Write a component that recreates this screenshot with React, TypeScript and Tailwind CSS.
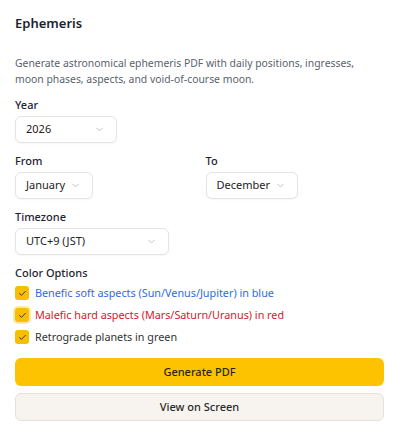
import { ChevronDown, Check } from "lucide-react";

const font = { fontFamily: '"Segoe UI", "Noto Sans", "Open Sans", sans-serif' };

function Select({ value, width }: { value: string; width: string }) {
  return (
    <div
      className={`flex items-center justify-between h-[27px] ${width} pl-[10px] pr-[11px] rounded-[6px] border border-[#e4e4e7] bg-white shadow-[0_1px_2px_rgba(0,0,0,0.04)]`}
    >
      <span className="text-[11px] text-[#222]">{value}</span>
      <ChevronDown className="h-[11px] w-[11px] text-[#a3a8b1]" strokeWidth={1.5} />
    </div>
  );
}

function Label({ children }: { children: string }) {
  return <div className="text-[11px] font-medium text-[#1f2333] leading-[16px] mb-[3px]">{children}</div>;
}

function Box({ focus }: { focus?: boolean }) {
  return (
    <span
      className={`flex items-center justify-center h-[14px] w-[14px] rounded-[3px] bg-[#f7bf00] ${
        focus ? "shadow-[0_0_0_2px_rgba(247,191,0,0.35)]" : ""
      }`}
    >
      <Check className="h-[9px] w-[9px] text-[#3a2f00]" strokeWidth={2.5} />
    </span>
  );
}

export default function App() {
  const options = [
    { text: "Benefic soft aspects (Sun/Venus/Jupiter) in blue", color: "text-[#2d6be4]" },
    { text: "Malefic hard aspects (Mars/Saturn/Uranus) in red", color: "text-[#d11a2a]", focus: true },
    { text: "Retrograde planets in green", color: "text-[#333]" },
  ];

  return (
    <div className="w-[401px] h-[439px] bg-white pl-[15px] pr-[17px] pt-[13px]" style={font}>
      <h2 className="text-[13px] font-semibold text-[#1c1f33] leading-[20px]">Ephemeris</h2>

      <p className="mt-[22px] text-[10.4px] leading-[16px] text-[#5a5f6b]">
        Generate astronomical ephemeris PDF with daily positions, ingresses, moon phases, aspects, and void-of-course
        moon.
      </p>

      <div className="mt-[10px]">
        <Label>Year</Label>
        <Select value="2026" width="w-[102px]" />
      </div>

      <div className="mt-[10px] grid grid-cols-2 gap-3">
        <div>
          <Label>From</Label>
          <Select value="January" width="w-[78px]" />
        </div>
        <div>
          <Label>To</Label>
          <Select value="December" width="w-[92px]" />
        </div>
      </div>

      <div className="mt-[10px]">
        <Label>Timezone</Label>
        <Select value="UTC+9 (JST)" width="w-[154px]" />
      </div>

      <div className="mt-[10px]">
        <Label>Color Options</Label>
        <div className="mt-[4px] flex flex-col gap-[6px]">
          {options.map((o) => (
            <label key={o.text} className="flex items-center gap-[6px] h-[16px]">
              <Box focus={o.focus} />
              <span className={`text-[10.8px] ${o.color}`}>{o.text}</span>
            </label>
          ))}
        </div>
      </div>

      <div className="mt-[13px] flex flex-col gap-[7px]">
        <button className="h-[28px] w-full rounded-[6px] bg-[#fdc300] text-[11px] font-medium text-[#2a2410]">
          Generate PDF
        </button>
        <button className="h-[28px] w-full rounded-[6px] bg-[#f7f4ef] border border-[#e6e2db] text-[11px] font-medium text-[#2a2a2a]">
          View on Screen
        </button>
      </div>
    </div>
  );
}
